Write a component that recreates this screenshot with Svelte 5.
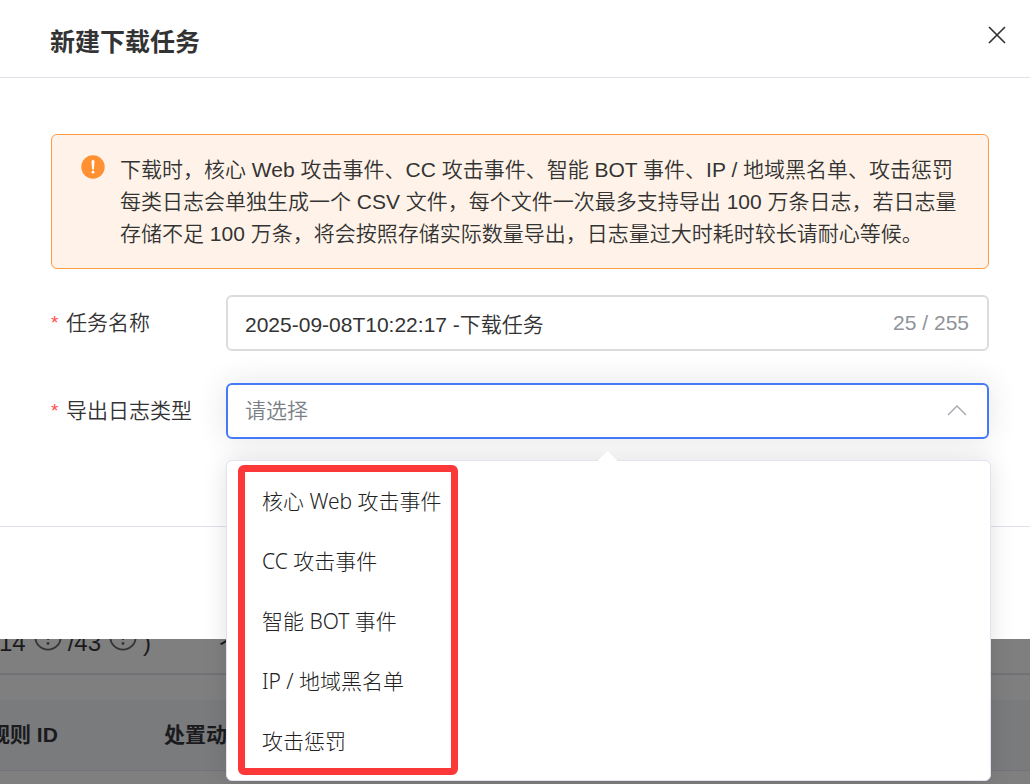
<script>
  const limit = 255;
  let taskName = $state('2025-09-08T10:22:17 -下载任务');
  let logType = $state('');
  const logTypes = ['核心 Web 攻击事件', 'CC 攻击事件', '智能 BOT 事件', 'IP / 地域黑名单', '攻击惩罚'];
</script>

{#snippet hint()}
  <svg class="hint" viewBox="0 0 28 28" aria-hidden="true">
    <circle cx="14" cy="14" r="12.7" fill="none" stroke="currentColor" stroke-width="1.8" />
    <path
      d="M10.5 11a3.5 3.5 0 1 1 5 3.2c-1 .5-1.5 1.2-1.5 2.8"
      fill="none"
      stroke="currentColor"
      stroke-width="2"
    />
    <circle cx="14" cy="20.5" r="1.4" fill="currentColor" />
  </svg>
{/snippet}

<div class="page" lang="zh-CN">
  <div class="dialog" role="dialog" aria-labelledby="dialog-title">
    <header>
      <h1 id="dialog-title">新建下载任务</h1>
      <button class="close" type="button" aria-label="关闭">
        <svg viewBox="0 0 18 18" aria-hidden="true">
          <path d="M1 1l16 16M17 1L1 17" fill="none" stroke="#333" stroke-width="1.7" />
        </svg>
      </button>
    </header>

    <form>
      <div class="notice">
        <svg viewBox="0 0 24 24" aria-hidden="true">
          <circle cx="12" cy="12" r="11.7" fill="#ff9132" />
          <path d="M10.5 6.6a1.5 1.5 0 0 1 3 0l-.6 7.2a.9.9 0 0 1-1.8 0z" fill="#fff" />
          <circle cx="12" cy="17.2" r="1.4" fill="#fff" />
        </svg>
        <p>下载时，核心 Web 攻击事件、CC 攻击事件、智能 BOT 事件、IP / 地域黑名单、攻击惩罚每类日志会单独生成一个 CSV 文件，每个文件一次最多支持导出 100 万条日志，若日志量存储不足 100 万条，将会按照存储实际数量导出，日志量过大时耗时较长请耐心等候。</p>
      </div>

      <div class="row">
        <label for="task-name"><span class="star">*</span>任务名称</label>
        <div class="field">
          <input id="task-name" type="text" maxlength={limit} bind:value={taskName} />
          <span class="count">25 / {limit}</span>
        </div>
      </div>

      <div class="row">
        <label for="log-type"><span class="star">*</span>导出日志类型</label>
        <div class="field open">
          <select id="log-type" bind:value={logType}>
            <option value="">请选择</option>
            {#each logTypes as type}
              <option value={type}>{type}</option>
            {/each}
          </select>
          <svg class="chevron" viewBox="0 0 20 12" aria-hidden="true">
            <path d="M1 10l9-9 9 9" fill="none" stroke="#a3a6ad" stroke-width="1.4" />
          </svg>
          <div class="popover">
            <ul>
              {#each logTypes as type}
                <li><button type="button" onclick={() => (logType = type)}>{type}</button></li>
              {/each}
            </ul>
            <div class="mark"></div>
          </div>
        </div>
      </div>
    </form>

    <footer></footer>
  </div>

  <div class="behind">
    <div class="quota">
      <span>14</span>{@render hint()}<span>/43</span>{@render hint()}<span>)</span>
      <span class="unit">个</span>
    </div>
    <table>
      <thead>
        <tr><th class="rule">规则 ID</th><th>处置动作</th></tr>
      </thead>
    </table>
  </div>
</div>

<style>
  :global(body) {
    margin: 0;
    background: #7f7f7f;
  }
  .page {
    min-height: 100vh;
    box-sizing: border-box;
    overflow: hidden;
    font-family: 'Liberation Sans', 'Noto Sans CJK SC', sans-serif;
    font-size: 21px;
    font-weight: 350;
    color: #333;
  }
  .dialog {
    position: relative;
    z-index: 1;
    background: #fff;
  }
  header {
    display: flex;
    justify-content: space-between;
    align-items: flex-start;
    padding: 24px 24px 17px 50px;
    border-bottom: 1px solid #e1e1ec;
  }
  h1 {
    margin: 0;
    font-size: 25px;
    line-height: 36px;
    font-weight: 700;
  }
  button {
    border: 0;
    padding: 0;
    background: none;
    font: inherit;
    color: inherit;
    cursor: pointer;
  }
  .close {
    display: flex;
    padding-top: 2px;
  }
  .close svg {
    width: 18px;
    height: 18px;
  }
  form {
    display: flex;
    flex-direction: column;
    padding: 56px 41px 87px 51px;
  }
  .notice {
    display: flex;
    align-items: flex-start;
    gap: 15px;
    padding: 19px 20px 18px 29px;
    margin-bottom: 26px;
    border: 1px solid #ff9a45;
    border-radius: 6px;
    background: #fff3e9;
  }
  .notice svg {
    flex: none;
    width: 24px;
    height: 24px;
    margin-top: 1px;
  }
  .notice p {
    margin: 0;
    line-height: 32px;
  }
  .row {
    display: flex;
    align-items: center;
  }
  .row + .row {
    margin-top: 32px;
  }
  label {
    display: flex;
    flex: none;
    width: 175px;
    line-height: 32px;
  }
  .star {
    width: 15px;
    color: #ff4d4f;
    font-size: 19px;
  }
  .field {
    position: relative;
    display: flex;
    align-items: center;
    flex: 1;
    height: 56px;
    box-sizing: border-box;
    padding: 0 18px 0 17px;
    border: 2px solid #dcdcdc;
    border-radius: 6px;
    background: #fff;
  }
  input,
  select {
    flex: 1;
    min-width: 0;
    height: 100%;
    border: 0;
    padding: 0;
    outline: 0;
    background: none;
    font: inherit;
    color: inherit;
  }
  select {
    appearance: none;
    padding-bottom: 2px;
    color: #7c7f86;
  }
  .count {
    color: #909399;
  }
  .open {
    padding-right: 20px;
    border-color: #447af7;
    box-shadow: 0 0 30px rgba(30, 40, 60, 0.12);
  }
  .chevron {
    width: 20px;
    height: 12px;
  }
  .popover {
    position: absolute;
    top: 75px;
    left: -2px;
    right: -4px;
    padding: 10px 0 9px;
    border: 1px solid #e1e3ee;
    border-radius: 6px;
    background: #fff;
    box-shadow: 0 0 24px rgba(0, 0, 0, 0.12);
    font-family: 'Noto Sans', 'Noto Sans CJK SC', sans-serif;
    font-weight: 300;
    color: #222;
  }
  .popover::before {
    content: '';
    position: absolute;
    top: -7px;
    left: 50%;
    width: 15px;
    height: 15px;
    margin-left: -9px;
    background: #fff;
    transform: rotate(45deg);
  }
  ul {
    position: relative;
    margin: 0;
    padding: 0;
    list-style: none;
  }
  li button {
    display: block;
    width: 100%;
    padding: 0 35px;
    line-height: 60px;
    text-align: left;
  }
  .mark {
    position: absolute;
    top: 4px;
    bottom: 5px;
    left: 11px;
    width: 220px;
    box-sizing: border-box;
    border: 7px solid #fc3838;
    border-radius: 6px;
    pointer-events: none;
  }
  footer {
    height: 112px;
    border-top: 1px solid #e1e1ec;
  }
  .behind {
    margin-top: -12px;
    color: #1b1b1d;
  }
  .quota {
    display: flex;
    align-items: center;
    gap: 8px;
    height: 32px;
    margin-left: -1px;
    padding-bottom: 14px;
    border-bottom: 2px solid #727276;
    font-size: 24px;
    font-weight: 400;
  }
  .hint {
    width: 28px;
    height: 28px;
    margin-bottom: 12px;
    margin-right: -2px;
    color: #353537;
  }
  .unit {
    margin-left: 60px;
  }
  table {
    width: 100%;
    margin-top: 25px;
    border-collapse: collapse;
    background: #7a7b7d;
  }
  th {
    height: 66px;
    padding: 0 0 4px;
    border-bottom: 1px solid #727477;
    text-align: left;
    font-weight: 700;
  }
  .rule {
    width: 164px;
    text-indent: -11px;
  }
</style>
